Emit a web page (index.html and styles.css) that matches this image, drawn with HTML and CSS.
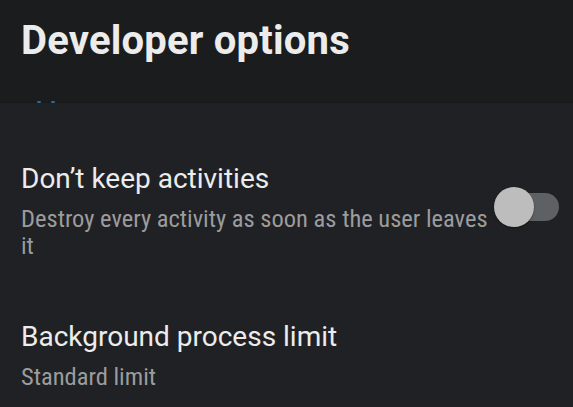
FILE: index.html
```html
<!DOCTYPE html>
<html>
<head>
<meta charset="utf-8">
<link rel="stylesheet" href="styles.css">
</head>
<body>
<div class="screen">
  <header class="appbar">
    <h1 class="title">Developer options</h1>
    <div class="peek"><span class="dot"></span><span class="dot"></span></div>
  </header>
  <main class="list">
    <div class="item item-first">
      <div class="texts">
        <div class="primary">Don’t keep activities</div>
        <div class="secondary">Destroy every activity as soon as the user leaves it</div>
      </div>
      <div class="switch"><span class="track"></span><span class="thumb"></span></div>
    </div>
    <div class="item item-second">
      <div class="texts">
        <div class="primary">Background process limit</div>
        <div class="secondary">Standard limit</div>
      </div>
    </div>
  </main>
</div>
</body>
</html>
```
FILE: styles.css
```css
html, body {
  margin: 0;
  padding: 0;
  background: #202124;
}
.screen {
  width: 573px;
  height: 407px;
  overflow: hidden;
  font-family: Roboto, "Noto Sans", sans-serif;
  background: #202124;
}
.appbar {
  position: relative;
  height: 103px;
  background: #1b1c1e;
  border-bottom: 1px solid #161719;
  box-sizing: border-box;
  padding: 18px 21px 0;
}
.title {
  margin: 0;
  font-size: 40px;
  font-weight: 700;
  color: #ececec;
  line-height: 46px;
  letter-spacing: 0.2px;
}
.peek {
  position: absolute;
  left: 37px;
  bottom: -1px;
  display: flex;
  gap: 10px;
}
.dot {
  width: 4px;
  height: 2px;
  background: #2c6a98;
  border-radius: 1px;
}
.list {
  display: flex;
  flex-direction: column;
}
.item {
  display: flex;
  align-items: flex-start;
  padding: 0 14px 0 21px;
}
.item-first {
  padding-top: 59px;
}
.item-second {
  padding-top: 61px;
}
.texts {
  flex: 1;
  min-width: 0;
}
.primary {
  font-size: 28px;
  line-height: 34px;
  color: #ececec;
}
.secondary {
  margin-top: 9px;
  font-family: "Roboto Condensed", "Liberation Sans Narrow", Roboto, sans-serif;
  font-stretch: condensed;
  font-size: 24.5px;
  line-height: 27px;
  color: #9c9c9e;
}
.switch {
  position: relative;
  width: 65px;
  height: 40px;
  flex: none;
  margin-top: 25px;
}
.track {
  position: absolute;
  left: 16px;
  top: 6px;
  width: 49px;
  height: 28px;
  border-radius: 14px;
  background: #5e6163;
}
.thumb {
  position: absolute;
  left: 0;
  top: 0;
  width: 40px;
  height: 40px;
  border-radius: 50%;
  background: #bdbdbd;
  box-shadow: 0 1px 2px rgba(0,0,0,0.4);
}
```
